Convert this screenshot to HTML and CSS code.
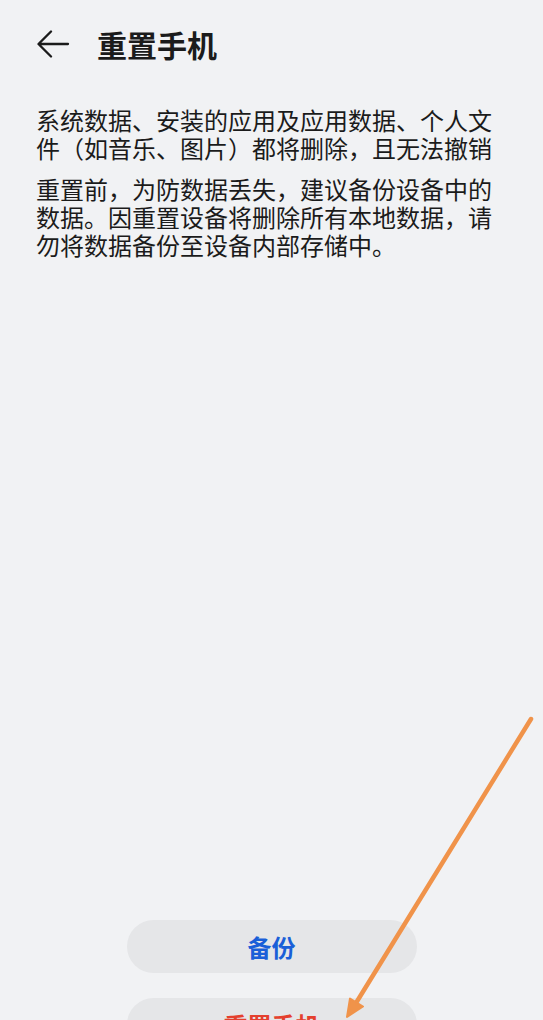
FILE: index.html
```html
<!DOCTYPE html>
<html lang="zh-CN">
<head>
    <meta charset="UTF-8">
    <meta name="viewport" content="width=device-width, initial-scale=1.0">
    <title>重置手机</title>
    <link rel="stylesheet" href="styles.css">
</head>
<body>
    <div class="screen">
        <div class="header">
            <svg class="back" width="34" height="28" viewBox="0 0 34 28">
                <path d="M32 14H3M15 1.5L2.5 14L15 26.5" fill="none" stroke="#1b1b1b" stroke-width="2.3" stroke-linecap="round" stroke-linejoin="round"/>
            </svg>
            <div class="title">重置手机</div>
        </div>

        <div class="content">
            <p class="desc">系统数据、安装的应用及应用数据、个人文件（如音乐、图片）都将删除，且无法撤销</p>
            <p class="desc">重置前，为防数据丢失，建议备份设备中的数据。因重置设备将删除所有本地数据，请勿将数据备份至设备内部存储中。</p>
        </div>

        <div class="actions">
            <div class="btn btn-backup">备份</div>
            <div class="btn btn-reset">重置手机</div>
        </div>

        <!-- annotation arrow drawn over the screenshot -->
        <svg class="pointer" width="543" height="1020" viewBox="0 0 543 1020">
            <line x1="531" y1="719" x2="356" y2="1003" stroke="#f0934a" stroke-width="4.5" stroke-linecap="round"/>
            <polygon points="347,1017 363,1006.5 350,998.5" fill="#f0934a" stroke="#f0934a" stroke-width="2" stroke-linejoin="round"/>
        </svg>
    </div>
</body>
</html>
```

FILE: styles.css
```css
html, body {
    margin: 0;
    padding: 0;
    background: #f1f2f4;
    overflow: hidden;
}

body {
    font-family: "Noto Sans CJK SC", "Noto Sans", sans-serif;
    color: #1b1b1b;
}

.screen {
    position: relative;
    height: 1060px;
    display: flex;
    flex-direction: column;
}

.header {
    height: 88px;
    display: flex;
    align-items: center;
    padding-left: 36px;
}

.back {
    display: block;
}

.title {
    margin-left: 27px;
    font-size: 30px;
    font-weight: 700;
    line-height: 40px;
}

.content {
    padding: 18px 36px 0 36px;
}

.desc {
    margin: 0 0 13px 0;
    font-size: 24px;
    line-height: 28px;
}

.actions {
    margin-top: auto;
    display: flex;
    flex-direction: column;
    align-items: center;
    gap: 25px;
    padding-bottom: 9px;
}

.btn {
    width: 290px;
    height: 53px;
    border-radius: 27px;
    background: #e5e6e8;
    display: flex;
    align-items: center;
    justify-content: center;
    font-size: 24px;
    font-weight: 700;
}

.btn-backup {
    color: #1a5fd8;
}

.btn-reset {
    color: #e4402e;
}

.pointer {
    position: absolute;
    top: 0;
    left: 0;
    pointer-events: none;
}
```
